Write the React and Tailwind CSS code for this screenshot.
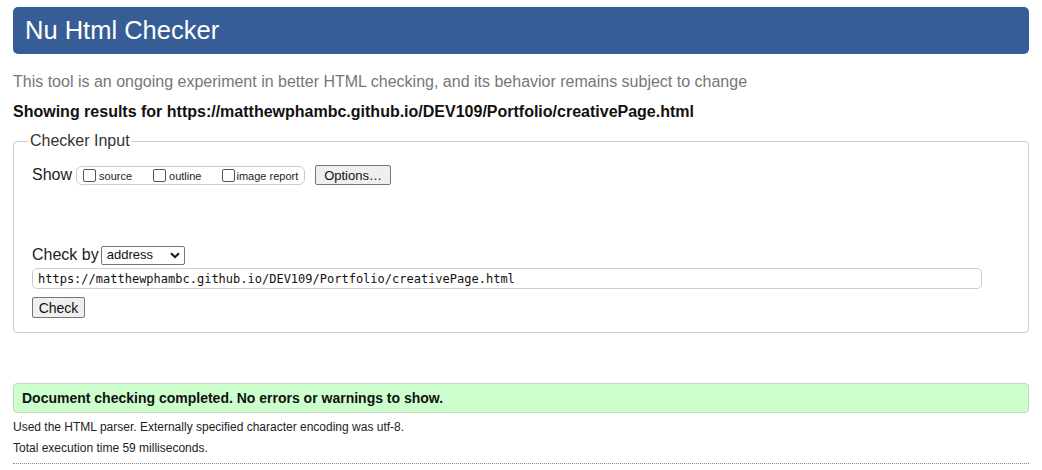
export default function App() {
  const url = 'https://matthewphambc.github.io/DEV109/Portfolio/creativePage.html';

  return (
    <div className="min-h-[470px] bg-white px-[13px] pt-[7px] font-['Liberation_Sans',Arial,sans-serif] text-[#222]">
      <h1 className="flex h-[47px] items-center rounded-[5px] bg-[#365d95] pl-[12px] text-[25.5px] leading-none text-white">
        Nu Html Checker
      </h1>

      <p className="mt-[19px] text-[16px] leading-[18px] text-[#777]">
        This tool is an ongoing experiment in better HTML checking, and its behavior remains subject to change
      </p>
      <p className="mt-[12px] text-[16px] font-bold leading-[18px] text-[#111]">
        Showing results for {url}
      </p>

      <fieldset className="mt-[11px] h-[201px] rounded-[4px] border border-[#ccc] px-[18px]">
        <legend className="ml-[-4px] px-[2px] text-[16px] leading-[18px] text-[#333]">Checker Input</legend>

        <div className="mt-[13px] flex items-center">
          <span className="text-[16px] text-[#222]">Show</span>
          <div className="ml-[4px] flex h-[19px] w-[229px] items-center rounded-[6px] border border-[#ccc] pl-[6px] text-[11px] text-[#222]">
            <label className="flex items-center">
              <span className="h-[13px] w-[13px] rounded-[2px] border border-[#555] bg-white" />
              <span className="ml-[3px] mt-[2px]">source</span>
            </label>
            <label className="ml-[21px] flex items-center">
              <span className="h-[13px] w-[13px] rounded-[2px] border border-[#555] bg-white" />
              <span className="ml-[3px] mt-[2px]">outline</span>
            </label>
            <label className="ml-[21px] flex items-center">
              <span className="h-[13px] w-[13px] rounded-[2px] border border-[#555] bg-white" />
              <span className="ml-[1px] mt-[2px]">image report</span>
            </label>
          </div>
          <button className="ml-[10px] h-[20px] w-[76px] rounded-[2px] border border-[#767676] bg-[#efefef] text-[13px] leading-none text-[#111]">
            Options…
          </button>
        </div>

        <div className="mt-[56px] flex items-center">
          <span className="text-[16px] text-[#222]">Check by</span>
          <div className="ml-[2px] flex h-[19px] w-[84px] shrink-0 items-center justify-between rounded-[2px] border border-[#767676] bg-white pl-[5px] pr-[4px] text-[13px] text-[#111]">
            <span className="whitespace-nowrap">address</span>
            <svg className="shrink-0" width="10" height="7" viewBox="0 0 10 7">
              <path d="M1 1.2 L5 5.2 L9 1.2" fill="none" stroke="#111" strokeWidth="2" />
            </svg>
          </div>
        </div>

        <div className="mt-[1px] flex h-[21px] w-[950px] items-center rounded-[5px] border border-[#ccc] pl-[5px] font-['DejaVu_Sans_Mono',monospace] text-[12px] text-[#111]">
          {url}
        </div>

        <button className="mt-[8px] h-[21px] w-[53px] rounded-[2px] border border-[#767676] bg-[#efefef] text-[14px] leading-none text-[#111]">
          Check
        </button>
      </fieldset>

      <div className="mt-[50px] flex h-[30px] items-center rounded-[4px] border border-[#c3d8c3] bg-[#ccffcc] pl-[8px] text-[14px] font-bold text-[#111]">
        Document checking completed. No errors or warnings to show.
      </div>

      <p className="mt-[7px] text-[12px] leading-[14px] text-[#222]">
        Used the HTML parser. Externally specified character encoding was utf-8.
      </p>
      <p className="mt-[7px] text-[12px] leading-[14px] text-[#222]">Total execution time 59 milliseconds.</p>
      <div className="mt-[8px] border-b border-dotted border-[#888]" />
    </div>
  );
}
